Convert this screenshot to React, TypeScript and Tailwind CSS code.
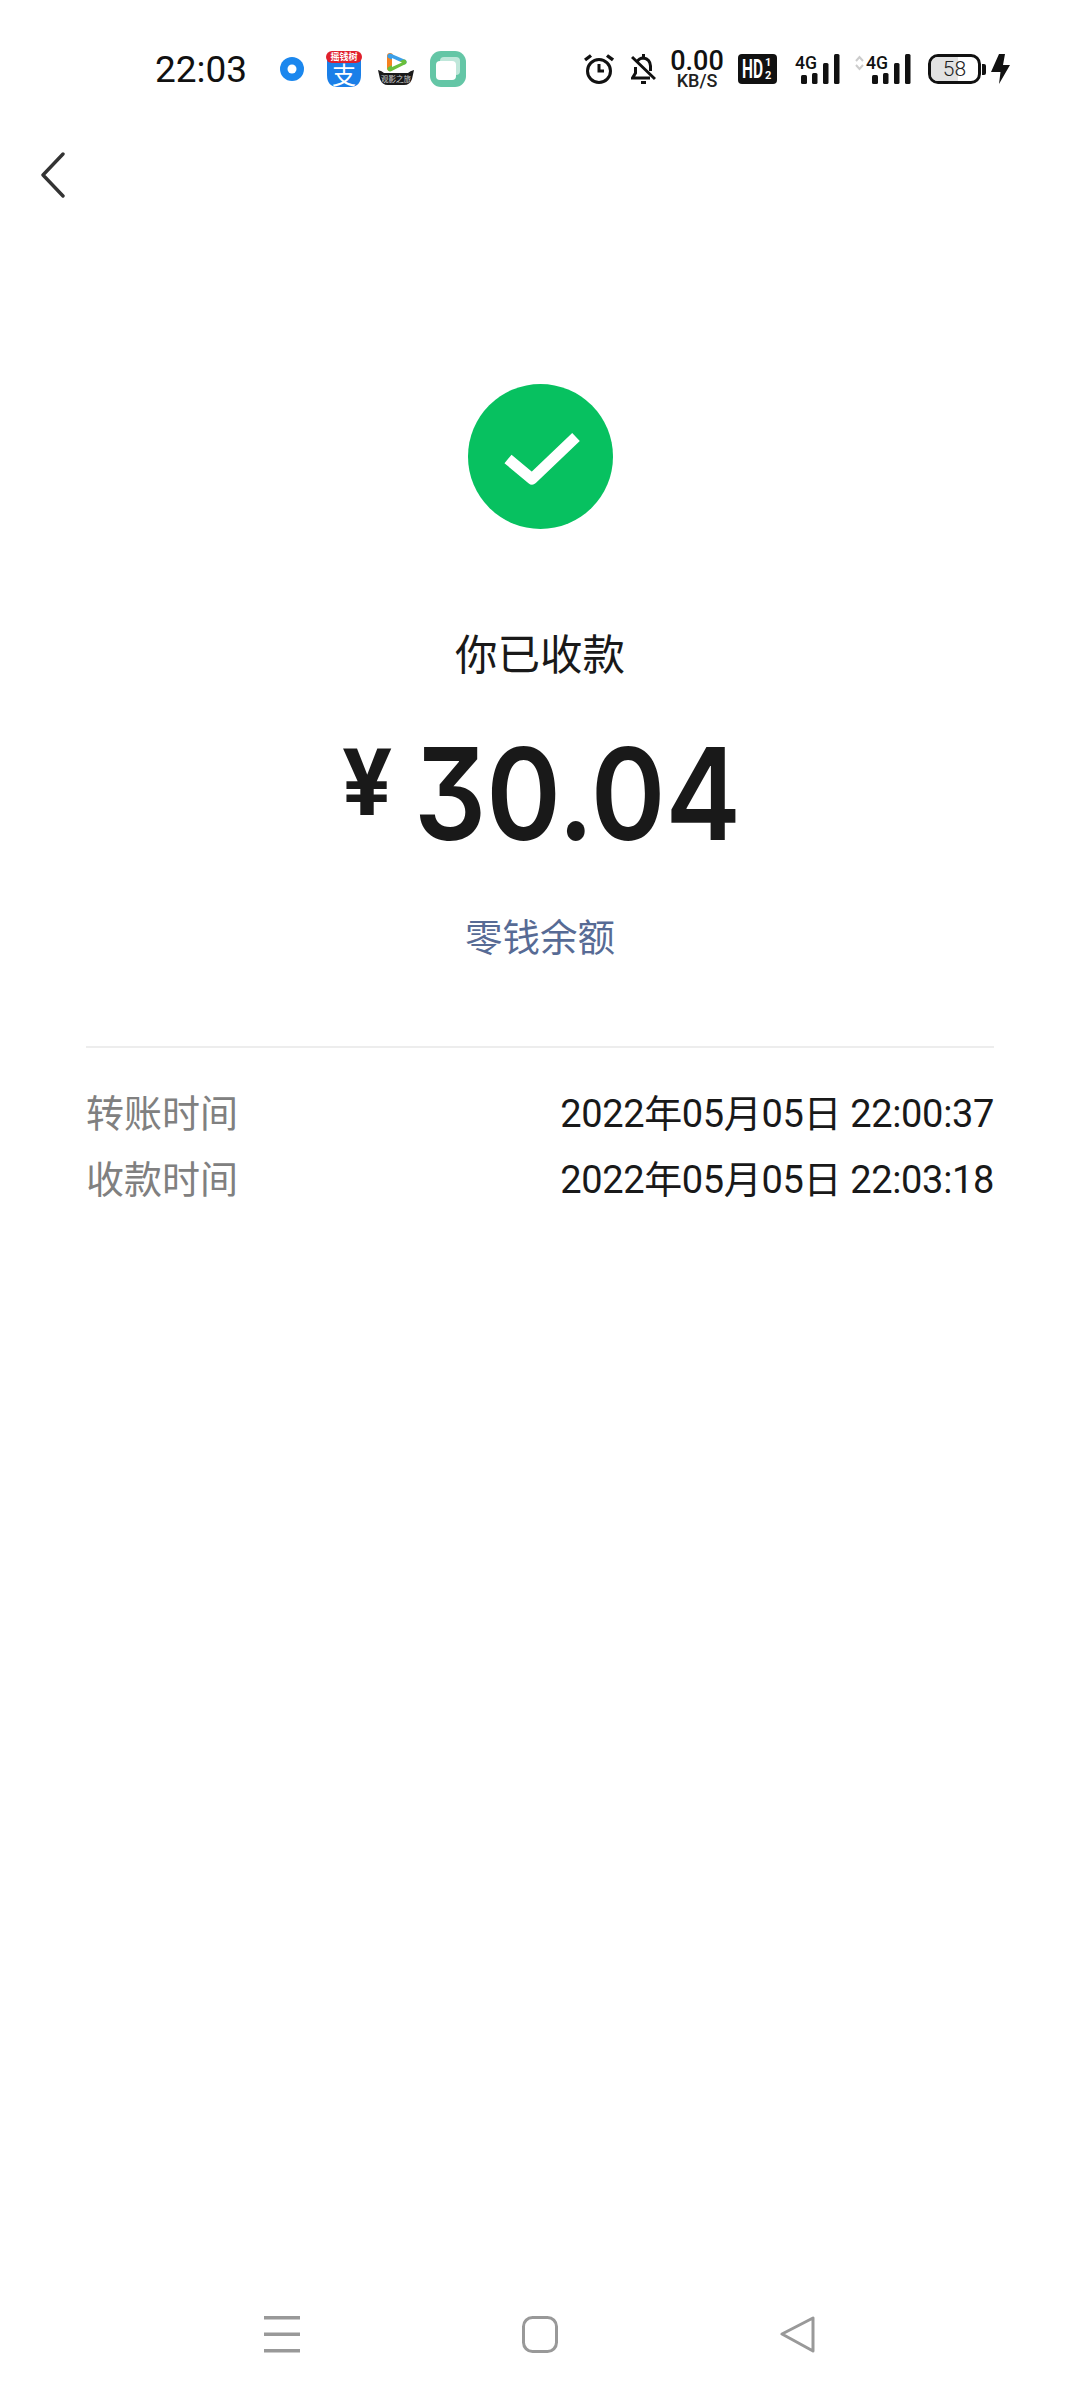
const sans = "font-['Roboto','Noto_Sans_CJK_SC',sans-serif]";

function AppIcons() {
  return (
    <div className="flex items-center ml-[33px]">
      {/* blue dot app */}
      <svg width="24" height="24" viewBox="0 0 24 24">
        <circle cx="12" cy="12" r="12" fill="#1b87ee" />
        <circle cx="12" cy="12" r="4.5" fill="#fff" />
      </svg>
      {/* alipay */}
      <svg className="ml-[22px] overflow-visible" width="36" height="36" viewBox="0 0 36 36">
        <path d="M1 8 H35 V24 Q35 36 24 36 H12 Q1 36 1 24 Z" fill="#1a7fe8" />
        <rect x="0" y="0" width="36" height="12" rx="6" fill="#e0202c" />
        <text x="18" y="9" textAnchor="middle" fontSize="9" fontWeight="700" fill="#fff" fontFamily="'Noto Sans CJK SC'">摇钱树</text>
        <text x="18" y="33" textAnchor="middle" fontSize="24" fill="#fff" fontFamily="'Noto Sans CJK SC'">支</text>
      </svg>
      {/* tencent video */}
      <svg className="ml-[16px] overflow-visible" width="36" height="32" viewBox="0 0 36 32">
        <path d="M12 3 L12 15" stroke="#f58220" strokeWidth="6" strokeLinecap="round" />
        <path d="M12 3 L26 9" stroke="#3c9fe8" strokeWidth="5" strokeLinecap="round" />
        <path d="M26 9 L12 16" stroke="#69bf3c" strokeWidth="5" strokeLinecap="round" />
        <path d="M14 5 L24 9.5 L14 14 Z" fill="#fff" />
        <path d="M0 17 Q4 18 6 20 H30 Q32 18 36 17 L34 26 Q32 32 26 32 H10 Q4 32 2 26 Z" fill="#1a1a1a" />
        <text x="18" y="29" textAnchor="middle" fontSize="7.5" fill="#ccc" fontFamily="'Noto Sans CJK SC'">观影之旅</text>
      </svg>
      {/* green square */}
      <svg className="ml-[16px]" width="36" height="36" viewBox="0 0 36 36">
        <rect width="36" height="36" rx="11" fill="#64c6a6" />
        <rect x="10" y="6" width="20" height="18" rx="4" fill="#bfe7da" />
        <rect x="6" y="10" width="20" height="19" rx="4" fill="#fff" />
      </svg>
    </div>
  );
}

function Signal({ arrows }: { arrows?: boolean }) {
  return (
    <svg className="overflow-visible" width={arrows ? 56 : 45} height="30" viewBox={arrows ? '-11 0 56 30' : '0 0 45 30'}>
      {arrows && <path d="M-10 7 L-6.5 3 L-3 7 M-10 11 L-6.5 15 L-3 11" stroke="#ccc" strokeWidth="2" fill="none" />}
      <text x="0" y="15" fontSize="19" fontWeight="500" fontFamily="Roboto" fill="#111" textLength="22" lengthAdjust="spacingAndGlyphs">4G</text>
      <rect x="6" y="21" width="6" height="9" rx="1.5" fill="#111" />
      <rect x="17" y="19" width="5.5" height="11" rx="1.5" fill="#111" />
      <rect x="28" y="9" width="5.5" height="21" rx="1.5" fill="#111" />
      <rect x="39" y="0" width="5.5" height="30" rx="1.5" fill="#111" />
    </svg>
  );
}

function StatusBar() {
  return (
    <div className={`flex items-center h-[104px] pt-[34px] pl-[155px] text-[#111] ${sans}`}>
      <span className="text-[37px] leading-none w-[92px]">22:03</span>
      <AppIcons />
      <div className="flex items-center ml-[118px]">
        {/* alarm */}
        <svg width="30" height="30" viewBox="0 0 30 30" fill="none" stroke="#111" strokeWidth="3">
          <circle cx="15" cy="17" r="11.5" />
          <path d="M15 10 V17 H20" />
          <path d="M1 6 L7 1.5 M29 6 L23 1.5" strokeWidth="3.4" />
        </svg>
        {/* muted bell */}
        <svg className="ml-[17px]" width="25" height="30" viewBox="0 0 25 30" fill="none" stroke="#111" strokeWidth="3">
          <path d="M6 8 Q8 4 12.5 4 Q19 5 19.5 12 V17 M4.5 13 V19 L1.5 24 H19" />
          <path d="M12.5 0 V4 M10 28.5 H15 M1 3 L24 25" />
        </svg>
        <div className="ml-[15px] flex flex-col items-center w-[52px] font-medium">
          <span className="text-[27px] h-[21px] leading-[22px]">0.00</span>
          <span className="text-[18px] h-[15px] leading-[16px] mt-[2px] text-[#222]">KB/S</span>
        </div>
        {/* HD badge */}
        <svg className="ml-[15px]" width="39" height="30" viewBox="0 0 39 30">
          <rect width="39" height="30" rx="4" fill="#111" />
          <text x="4" y="24" fontSize="25" fontWeight="700" fontFamily="Roboto" fill="#fff" textLength="21" lengthAdjust="spacingAndGlyphs">HD</text>
          <text x="27" y="12" fontSize="11" fontWeight="700" fontFamily="Roboto" fill="#fff">1</text>
          <text x="27" y="25" fontSize="11" fontWeight="700" fontFamily="Roboto" fill="#fff">2</text>
        </svg>
        <div className="ml-[18px] flex">
          <Signal />
        </div>
        <div className="ml-[15px] flex">
          <Signal arrows />
        </div>
        {/* battery */}
        <div className="ml-[17px] flex items-center">
          <div className="w-[53px] h-[30px] rounded-[10px] border-[3px] border-[#111] overflow-hidden flex items-center justify-center relative">
            <div className="absolute left-0 top-0 bottom-0 w-[58%] bg-[#e2e2e2]" />
            <span className="relative text-[21px] font-light text-[#222] leading-none">58</span>
          </div>
          <div className="w-[4px] h-[11px] bg-[#111] rounded-r-[2px] ml-[1px]" />
          <svg className="ml-[5px]" width="19" height="30" viewBox="0 0 19 30">
            <path d="M8 0 H14 L12 11 H19 L8 30 L9.5 18 H0 Z" fill="#111" />
          </svg>
        </div>
      </div>
    </div>
  );
}

function TimeRow({ label, value }: { label: string; value: string }) {
  return (
    <div className="flex justify-between items-center h-[66px]">
      <span className="text-[38px] text-[#808080]">{label}</span>
      <span className="text-[38px] text-[#191919] tracking-[-0.35px]">{value}</span>
    </div>
  );
}

export default function App() {
  return (
    <div className={`w-[1080px] h-[2400px] bg-white flex flex-col overflow-hidden ${sans}`}>
      <StatusBar />
      <div className="h-[280px] pl-[40px] pt-[48px]">
        <svg width="25" height="46" viewBox="0 0 25 46" fill="none">
          <path d="M23 2 L3 23 L23 44" stroke="#333" strokeWidth="3.4" strokeLinecap="round" strokeLinejoin="round" />
        </svg>
      </div>
      <div className="flex flex-col items-center">
        <div className="flex items-center justify-center w-[145px] h-[145px] rounded-full bg-[#07c160]">
          <svg width="80" height="66" viewBox="0 0 80 66" fill="none">
            <path d="M8 35 L32 55 L76 13" stroke="#fff" strokeWidth="11" strokeLinejoin="round" />
          </svg>
        </div>
        <div className="mt-[99px] text-[42.5px] leading-[56px] text-[#191919]">你已收款</div>
        <div className="mt-[43px] w-[395px] h-[130px] flex items-start text-[#191919]">
          <span className="w-[71px] shrink-0 mt-[11px] text-[92px] leading-none font-bold">¥</span>
          <span className="mt-[3px] origin-left scale-x-[.885] whitespace-nowrap text-[128px] leading-[128px] font-semibold font-['Inter',sans-serif] [font-feature-settings:'cv09']">
            30.04
          </span>
        </div>
        <div className="mt-[56px] text-[37.5px] leading-[50px] text-[#576b95]">零钱余额</div>
      </div>
      <div className="ml-[86px] mr-[86px] mt-[83px]">
        <div className="border-t-2 border-[#ededed]" />
        <div className="mt-[33px]">
          <TimeRow label="转账时间" value="2022年05月05日 22:00:37" />
          <TimeRow label="收款时间" value="2022年05月05日 22:03:18" />
        </div>
      </div>
      <div className="mt-auto mb-[47px] h-[37px] flex pl-[264px]">
        <svg width="36" height="37" viewBox="0 0 36 37" fill="#999">
          <rect y="0" width="36" height="3.5" />
          <rect y="16.5" width="36" height="3.5" />
          <rect y="33" width="36" height="3.5" />
        </svg>
        <svg className="ml-[222px]" width="36" height="37" viewBox="0 0 36 37" fill="none" stroke="#999" strokeWidth="3">
          <rect x="1.5" y="1.5" width="33" height="34" rx="9" />
        </svg>
        <svg className="ml-[222px]" width="36" height="37" viewBox="0 0 36 37" fill="none" stroke="#999" strokeWidth="3" strokeLinejoin="round">
          <path d="M2 18 L33 2 V35 Z" />
        </svg>
      </div>
    </div>
  );
}
